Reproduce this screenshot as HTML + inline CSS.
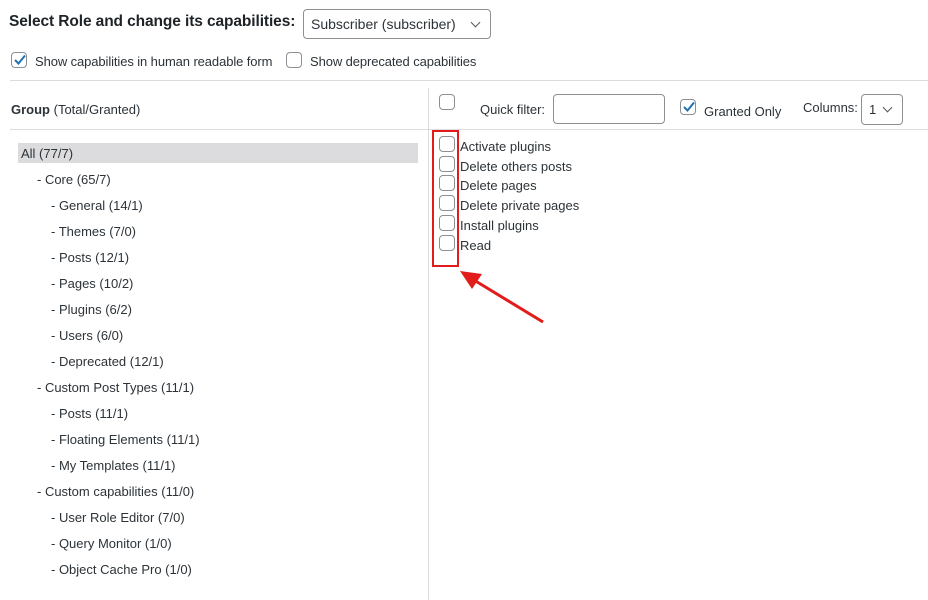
<!DOCTYPE html>
<html><head><style>
body{margin:0;width:928px;height:600px;background:#fff;font-family:"Liberation Sans",sans-serif;color:#2c3338;font-size:13px;position:relative;overflow:hidden}
.a{position:absolute;white-space:nowrap}
.cb{position:absolute;width:14px;height:14px;border:1px solid #8c8f94;border-radius:4px;background:#fff}
.sel{position:absolute;border:1px solid #8c8f94;border-radius:4px;background:#fff}
.chev{position:absolute;width:6px;height:6px;border-right:1.5px solid #50575e;border-bottom:1.5px solid #50575e;transform:rotate(45deg)}
.li{position:absolute;font-size:13px;color:#2c3338}
</style></head><body>
<div class="a" style="left:9px;top:13px;font-size:15.5px;font-weight:bold;color:#1d2327;letter-spacing:-0.1px">Select Role and change its capabilities:</div>
<div class="sel" style="left:303px;top:9px;width:186px;height:28px"></div>
<div class="a" style="left:311px;top:16px;font-size:14px">Subscriber (subscriber)</div>
<div class="chev" style="left:472px;top:19px"></div>

<div class="cb" style="left:11px;top:52px"></div>
<svg class="a" style="left:12px;top:52px" width="16" height="16"><path d="M3 8 L6.5 11.5 L13 3.5" stroke="#2271b1" stroke-width="2" fill="none"/></svg>
<div class="a" style="left:35px;top:54px;letter-spacing:-0.1px">Show capabilities in human readable form</div>
<div class="cb" style="left:286px;top:52px"></div>
<div class="a" style="left:310px;top:54px;letter-spacing:-0.1px">Show deprecated capabilities</div>

<div class="a" style="left:10px;top:80px;width:918px;height:1px;background:#dcdcde"></div>
<div class="a" style="left:428px;top:88px;width:1px;height:512px;background:#dcdcde"></div>
<div class="a" style="left:10px;top:129px;width:918px;height:1px;background:#dcdcde"></div>

<div class="a" style="left:11px;top:102px"><b>Group</b> (Total/Granted)</div>

<div class="cb" style="left:439px;top:94px"></div>
<div class="a" style="left:480px;top:102px">Quick filter:</div>
<div class="sel" style="left:553px;top:94px;width:110px;height:28px"></div>
<div class="cb" style="left:680px;top:99px"></div>
<svg class="a" style="left:681px;top:99px" width="16" height="16"><path d="M3 8 L6.5 11.5 L13 3.5" stroke="#2271b1" stroke-width="2" fill="none"/></svg>
<div class="a" style="left:704px;top:104px">Granted Only</div>
<div class="a" style="left:803px;top:100px">Columns:</div>
<div class="sel" style="left:861px;top:94px;width:40px;height:29px"></div>
<div class="a" style="left:869px;top:102px">1</div>
<div class="chev" style="left:884px;top:104px"></div>

<div class="a" style="left:18px;top:143px;width:400px;height:20px;background:#dcdcde"></div>
<div class="li" style="left:21px;top:146px">All (77/7)</div>
<div class="li" style="left:37px;top:172px">- Core (65/7)</div>
<div class="li" style="left:51px;top:198px">- General (14/1)</div>
<div class="li" style="left:51px;top:224px">- Themes (7/0)</div>
<div class="li" style="left:51px;top:250px">- Posts (12/1)</div>
<div class="li" style="left:51px;top:276px">- Pages (10/2)</div>
<div class="li" style="left:51px;top:302px">- Plugins (6/2)</div>
<div class="li" style="left:51px;top:328px">- Users (6/0)</div>
<div class="li" style="left:51px;top:354px">- Deprecated (12/1)</div>
<div class="li" style="left:37px;top:380px">- Custom Post Types (11/1)</div>
<div class="li" style="left:51px;top:406px">- Posts (11/1)</div>
<div class="li" style="left:51px;top:432px">- Floating Elements (11/1)</div>
<div class="li" style="left:51px;top:458px">- My Templates (11/1)</div>
<div class="li" style="left:37px;top:484px">- Custom capabilities (11/0)</div>
<div class="li" style="left:51px;top:510px">- User Role Editor (7/0)</div>
<div class="li" style="left:51px;top:536px">- Query Monitor (1/0)</div>
<div class="li" style="left:51px;top:562px">- Object Cache Pro (1/0)</div>

<div class="cb" style="left:439px;top:136px"></div><div class="li" style="left:460px;top:139px">Activate plugins</div>
<div class="cb" style="left:439px;top:156px"></div><div class="li" style="left:460px;top:159px">Delete others posts</div>
<div class="cb" style="left:439px;top:175px"></div><div class="li" style="left:460px;top:178px">Delete pages</div>
<div class="cb" style="left:439px;top:195px"></div><div class="li" style="left:460px;top:198px">Delete private pages</div>
<div class="cb" style="left:439px;top:215px"></div><div class="li" style="left:460px;top:218px">Install plugins</div>
<div class="cb" style="left:439px;top:235px"></div><div class="li" style="left:460px;top:238px">Read</div>

<div class="a" style="left:432px;top:130px;width:23px;height:133px;border:2px solid #e21b1b"></div>
<svg class="a" style="left:455px;top:262px" width="100" height="70"><line x1="88" y1="60" x2="14" y2="15" stroke="#e21b1b" stroke-width="3"/><polygon points="5,9 27,12 17,27" fill="#e21b1b"/></svg>
</body></html>
